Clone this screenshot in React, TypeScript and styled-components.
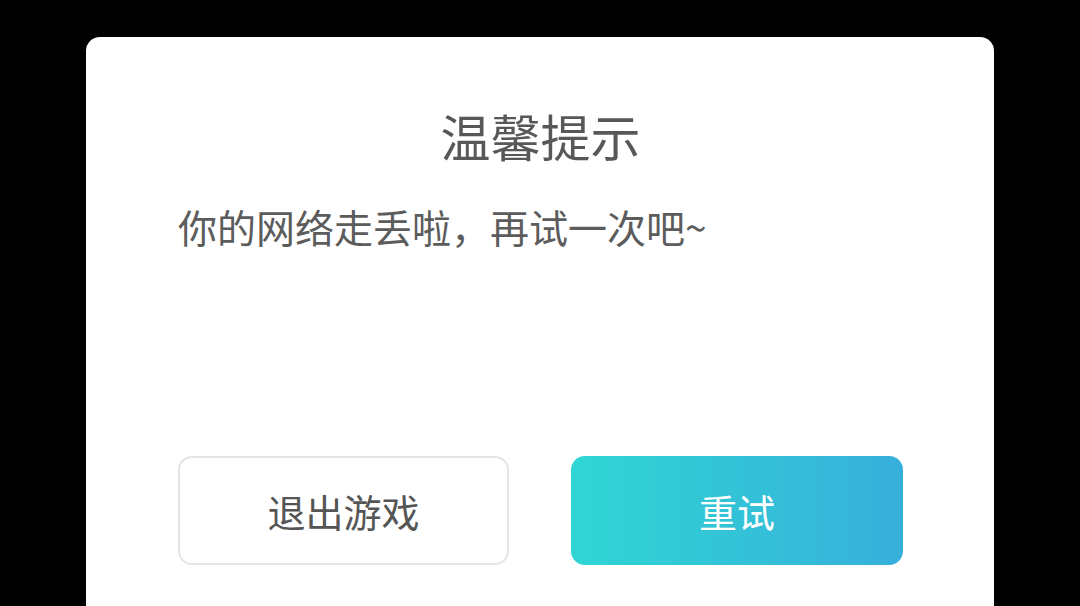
import React from 'react';
import styled, { createGlobalStyle } from 'styled-components';

const GlobalStyle = createGlobalStyle`
  html,
  body {
    margin: 0;
    padding: 0;
    background: #000;
    overflow: hidden;
  }

  body {
    font-family: 'Noto Sans CJK SC', 'Noto Sans', sans-serif;
  }
`;

type ButtonProps = {
  primary?: boolean;
};

const App: React.FC = () => {
  return (
    <>
      <GlobalStyle />
      <Screen>
        <Dialog>
          <Title>温馨提示</Title>
          <Message>你的网络走丢啦，再试一次吧~</Message>
          <Actions>
            <ActionButton>退出游戏</ActionButton>
            <ActionButton primary>重试</ActionButton>
          </Actions>
        </Dialog>
      </Screen>
    </>
  );
};

export default App;

const Screen = styled.div`
  width: 1080px;
  height: 606px;
  overflow: hidden;
  background: #000;
`;

const Dialog = styled.div`
  box-sizing: border-box;
  width: 908px;
  margin: 37px 0 0 86px;
  padding: 65px 91px 60px 92px;
  min-height: 620px;
  background: #fff;
  border-radius: 14px;
  display: flex;
  flex-direction: column;
`;

const Title = styled.h1`
  margin: 0;
  font-size: 50px;
  font-weight: 400;
  line-height: 66px;
  text-align: center;
  color: #585858;
`;

const Message = styled.p`
  margin: 33px 0 0;
  font-size: 39px;
  line-height: 50px;
  color: #5c5c5c;
`;

const Actions = styled.div`
  display: grid;
  grid-template-columns: 331px 1fr;
  gap: 62px;
  margin-top: 205px;
`;

const ActionButton = styled.button<ButtonProps>`
  padding: 0;
  box-sizing: border-box;
  height: 109px;
  border-radius: 14px;
  font-family: inherit;
  font-size: 38px;
  cursor: pointer;
  border: ${({ primary }) => (primary ? 'none' : '2px solid #e4e4e4')};
  color: ${({ primary }) => (primary ? '#fff' : '#555')};
  background: ${({ primary }) =>
    primary ? 'linear-gradient(90deg, #2fd6d4 0%, #37afdb 100%)' : '#fff'};
`;
